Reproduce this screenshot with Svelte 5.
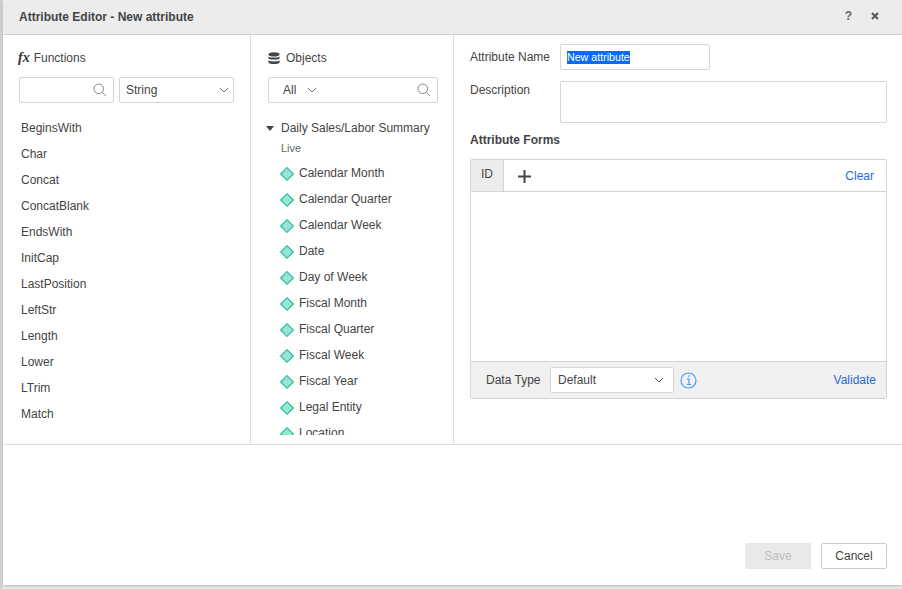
<script>
  const fns = ['BeginsWith','Char','Concat','ConcatBlank','EndsWith','InitCap','LastPosition','LeftStr','Length','Lower','LTrim','Match'];
  const objs = ['Calendar Month','Calendar Quarter','Calendar Week','Date','Day of Week','Fiscal Month','Fiscal Quarter','Fiscal Week','Fiscal Year','Legal Entity','Location'];
</script>

<div class="page">
  <div class="dialog">
    <header class="head">
      <span class="title">Attribute Editor - New attribute</span>
      <div class="head-icons">
        <span class="help">?</span>
        <svg class="close" width="8" height="8" viewBox="0 0 8 8"><path d="M1 1L7 7M7 1L1 7" stroke="#555" stroke-width="2"/></svg>
      </div>
    </header>
    <div class="main">
      <section class="col fn">
        <div class="col-title fn-title">
          <span class="fx">fx</span><span>Functions</span>
        </div>
        <div class="tools">
          <div class="box search">
            <svg width="14" height="14" viewBox="0 0 14 14" fill="none" stroke="#8a8a8a"><circle cx="5.8" cy="5.8" r="4.8"/><path d="M9.3 9.3L13 13"/></svg>
          </div>
          <div class="box select">
            <span>String</span>
            <svg width="10" height="6" viewBox="0 0 10 6" fill="none" stroke="#777"><path d="M1 1l4 4 4-4"/></svg>
          </div>
        </div>
        <ul class="fn-list">
          {#each fns as f}<li>{f}</li>{/each}
        </ul>
      </section>
      <section class="col obj">
        <div class="col-title obj-title">
          <svg width="12" height="13" viewBox="0 0 12 13" fill="#444">
            <ellipse cx="6" cy="2.4" rx="5.6" ry="2.2"/>
            <path d="M.4 4.4C1.5 6 10.5 6 11.6 4.4V6.4C10.5 8 1.5 8 .4 6.4z"/>
            <path d="M.4 8.2C1.5 9.8 10.5 9.8 11.6 8.2V10.4C10.5 12.6 1.5 12.6 .4 10.4z"/>
          </svg>
          <span>Objects</span>
        </div>
        <div class="box objsearch">
          <span class="all">All</span>
          <svg width="10" height="6" viewBox="0 0 10 6" fill="none" stroke="#777"><path d="M1 1l4 4 4-4"/></svg>
          <svg class="mag" width="14" height="14" viewBox="0 0 14 14" fill="none" stroke="#8a8a8a"><circle cx="5.8" cy="5.8" r="4.8"/><path d="M9.3 9.3L13 13"/></svg>
        </div>
        <div class="tree">
          <div class="root"><i class="caret"></i><span>Daily Sales/Labor Summary</span></div>
          <div class="live">Live</div>
          {#each objs as o}
            <div class="item">
              <svg width="14" height="14" viewBox="0 0 14 14"><path d="M7 .7L13.3 7 7 13.3.7 7z" fill="#98e3d2" stroke="#2fc0a2" stroke-width="1.2"/></svg>
              <span>{o}</span>
            </div>
          {/each}
        </div>
      </section>
      <section class="col edit">
        <div class="row name-row">
          <span class="lbl">Attribute Name</span>
          <div class="box name"><span class="sel">New attribute</span></div>
        </div>
        <div class="row desc-row">
          <span class="lbl">Description</span>
          <div class="box desc"></div>
        </div>
        <h3>Attribute Forms</h3>
        <div class="forms">
          <div class="tabs">
            <span class="tab">ID</span>
            <svg class="plus" width="13" height="13" viewBox="0 0 13 13"><path d="M6.5 0v13M0 6.5h13" stroke="#444" stroke-width="2"/></svg>
            <span class="link">Clear</span>
          </div>
          <div class="expr"></div>
          <div class="dt">
            <span class="dt-lbl">Data Type</span>
            <div class="box dt-sel">
              <span>Default</span>
              <svg width="10" height="6" viewBox="0 0 10 6" fill="none" stroke="#555"><path d="M1 1l4 4 4-4"/></svg>
            </div>
            <svg class="info" width="17" height="17" viewBox="0 0 17 17" fill="none"><circle cx="8.5" cy="8.5" r="7.5" stroke="#4a9df0" stroke-width="1.2"/><path d="M7 7.2h2v5M6.8 12.5h4.2M8.2 4.2h1.4" stroke="#4a9df0" stroke-width="1.2"/></svg>
            <span class="link">Validate</span>
          </div>
        </div>
      </section>
    </div>
    <footer class="foot">
      <button class="btn save">Save</button>
      <button class="btn cancel">Cancel</button>
    </footer>
  </div>
</div>

<style>
  :global(body) { margin: 0; background: #eee; }
  .page {
    width: 902px; height: 589px; overflow: hidden; padding-left: 3px; box-sizing: border-box;
    background: linear-gradient(90deg, #cfcfcf 0, #e0e0e0 3px, #eeeeee 3px);
    font: 12px/16px "Liberation Sans", Arial, sans-serif; color: #444;
  }
  .dialog { width: 899px; height: 585px; background: #fff; display: flex; flex-direction: column; box-shadow: 0 1px 3px rgba(0,0,0,.25); }
  .head {
    height: 34px; flex: none; background: #ececec; border-bottom: 1px solid #d0d0d0;
    display: flex; align-items: center; justify-content: space-between; padding: 0 23px 0 16px;
  }
  .title { font-weight: 700; color: #444; }
  .head-icons { display: flex; align-items: center; gap: 19px; }
  .help { font-weight: 700; color: #666; font-size: 12px; margin-top: -3px; }
  .close { margin-top: -3px; }
  .main { height: 409px; flex: none; display: flex; border-bottom: 1px solid #ddd; }
  .col { box-sizing: border-box; overflow: hidden; flex: none; }
  .fn { width: 248px; border-right: 1px solid #ddd; padding: 15px 0 0 16px; }
  .obj { width: 203px; border-right: 1px solid #ddd; padding: 15px 0 0 17px; }
  .edit { flex: 1; padding: 9px 15px 0 16px; }
  .col-title { display: flex; align-items: center; height: 16px; }
  .fn-title { gap: 4px; margin-left: -1px; }
  .obj-title { gap: 6px; }
  .fx { font: italic 700 14px/16px "Liberation Serif", serif; color: #333; }
  .box { box-sizing: border-box; border: 1px solid #d5d5d5; border-radius: 2px; background: #fff; }
  .tools { display: flex; gap: 5px; margin-top: 11px; }
  .search { width: 95px; height: 26px; display: flex; align-items: center; justify-content: flex-end; padding-right: 6px; }
  .select { width: 115px; height: 26px; display: flex; align-items: center; justify-content: space-between; padding: 0 4px 0 6px; }
  .fn-list { list-style: none; margin: 12px 0 0 2px; padding: 0; }
  .fn-list li { height: 26px; line-height: 26px; }
  .objsearch { width: 170px; height: 26px; margin-top: 11px; display: flex; align-items: center; padding-left: 14px; gap: 11px; }
  .mag { margin-left: auto; margin-right: 6px; }
  .tree { margin-top: 12px; height: 320px; overflow: hidden; margin-left: -2px; }
  .root { display: flex; align-items: center; height: 26px; gap: 7px; }
  .caret { width: 0; height: 0; border: 4px solid transparent; border-top: 5px solid #444; border-bottom: 0; }
  .live { height: 16px; line-height: 16px; margin: -1px 0 0 15px; font-size: 11px; color: #666; }
  .live + .item { margin-top: 4px; }
  .item { display: flex; align-items: center; height: 26px; gap: 5px; margin-left: 14px; }
  .item svg { margin-top: 2px; flex: none; }
  .item span { margin-top: -1px; }
  .row { display: flex; }
  .lbl { width: 90px; flex: none; }
  .name-row { align-items: center; }
  .name { width: 150px; height: 26px; display: flex; align-items: center; padding-left: 6px; }
  .sel { background: #0a6cf5; color: #fff; line-height: 13px; font-size: 10.67px; }
  .desc-row { margin-top: 11px; }
  .desc-row .lbl { padding-top: 1px; }
  .desc { width: 327px; height: 42px; }
  h3 { font-size: 12px; line-height: 16px; margin: 9px 0 0; color: #444; font-weight: 700; }
  .forms { margin-top: 11px; border: 1px solid #d5d5d5; border-radius: 2px; }
  .tabs { height: 31px; border-bottom: 1px solid #d5d5d5; display: flex; align-items: center; }
  .tab { width: 33px; height: 31px; line-height: 28px; box-sizing: border-box; text-align: center; background: #ececec; border-right: 1px solid #d5d5d5; }
  .plus { margin-left: 14px; margin-top: 1px; }
  .link { margin-left: auto; color: #2a6ad4; }
  .tabs .link { margin-right: 12px; }
  .expr { height: 169px; }
  .dt { background: #f0f0f0; border-top: 1px solid #d5d5d5; display: flex; align-items: center; padding: 0 10px 0 15px; box-sizing: border-box; height: 37px; }
  .dt-lbl { width: 64px; flex: none; }
  .dt-sel { width: 124px; height: 26px; display: flex; align-items: center; justify-content: space-between; padding: 0 9px 0 7px; }
  .info { margin-left: 6px; }
  .foot { flex: 1; display: flex; justify-content: flex-end; align-items: flex-end; gap: 10px; padding: 0 15px 16px 0; }
  .btn { box-sizing: border-box; width: 66px; height: 26px; border-radius: 2px; font: 12px "Liberation Sans", Arial, sans-serif; padding: 0; }
  .save { background: #e9e9e9; border: 0; color: #bdbdbd; }
  .cancel { background: #fff; border: 1px solid #ccc; color: #444; }
</style>
